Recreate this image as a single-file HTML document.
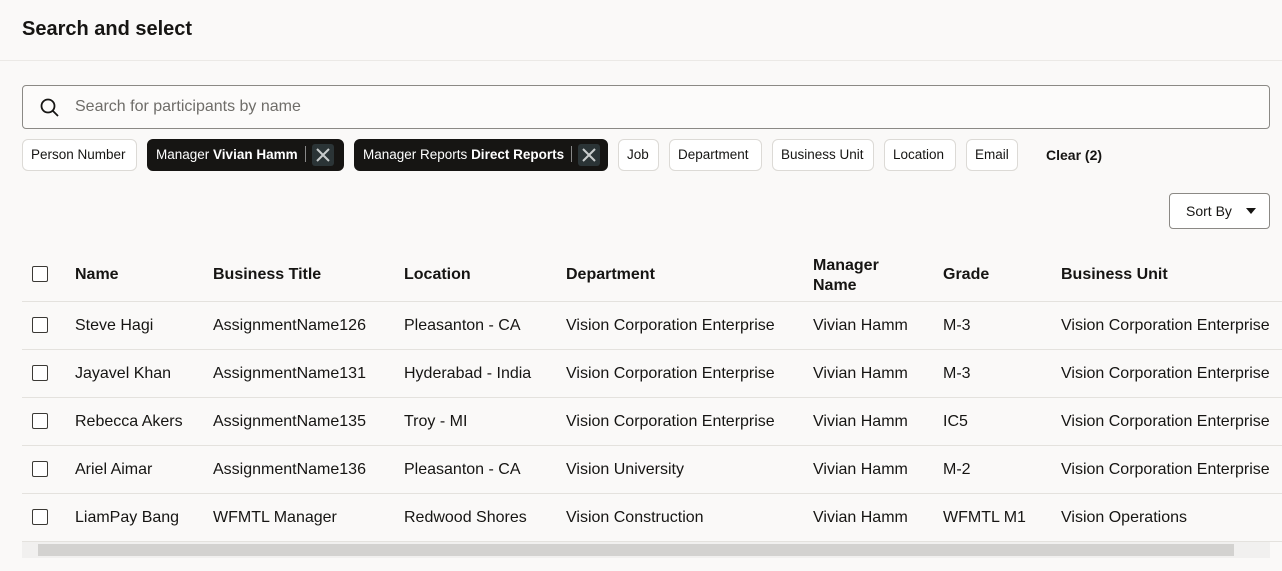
<!DOCTYPE html>
<html><head><meta charset="utf-8"><style>
*{box-sizing:border-box;margin:0;padding:0}
body{width:1282px;height:571px;overflow:hidden;background:#faf9f8;font-family:"Liberation Sans",sans-serif;color:#161513;position:relative}
.a{position:absolute;white-space:nowrap}
h1{position:absolute;left:22px;top:18px;font-size:20px;font-weight:bold}
.hr{position:absolute;left:0;right:0;top:60px;height:1px;background:#ebe9e6}
.search{position:absolute;left:22px;top:85px;width:1248px;height:44px;border:1px solid #8b8985;border-radius:4px;background:#fcfbfa}
.chip{position:absolute;top:139px;height:32px;border:1px solid #dcdad6;border-radius:6px;background:#fff;font-size:13.5px;line-height:30px;padding:0 8px;white-space:nowrap;overflow:hidden}
.chip.d{background:#161513;color:#fff;border-color:#161513;padding:0 0 0 8px}
.x{display:inline-block;vertical-align:top;margin:4px 4px 0 6px;width:22px;height:22px;border-radius:3px;background:#2b3436;position:relative}
.sep{display:inline-block;width:1px;height:16px;background:#888;vertical-align:middle;margin-left:7px;margin-top:-3px}
.cb{position:absolute;left:32px;width:16px;height:16px;border:1.5px solid #3b3935;border-radius:2px;background:#fff}
.th{position:absolute;font-size:16px;font-weight:bold;top:266px}
.line{position:absolute;left:22px;width:1260px;height:1px;background:#e4e2de}
.td{position:absolute;font-size:16px;white-space:nowrap}
</style></head><body>
<h1>Search and select</h1>
<div class="hr"></div>
<div class="search">
<svg class="a" style="left:16px;top:11px" width="22" height="22" viewBox="0 0 22 22"><circle cx="9" cy="9" r="6.5" fill="none" stroke="#161513" stroke-width="1.8"/><path d="M14 14l5 5" stroke="#161513" stroke-width="1.8"/></svg>
<span class="a" style="left:52px;top:12px;font-size:16px;color:#6f6d69">Search for participants by name</span>
</div>
<div class="chip" style="left:22px;width:115px">Person Number</div>
<div class="chip d" style="left:147px;width:197px">Manager <b>Vivian Hamm</b><span class="sep"></span><span class="x"><svg width="22" height="22" viewBox="0 0 22 22" style="position:absolute;left:0;top:0"><path d="M5 5l12 12M17 5L5 17" stroke="#c9cccd" stroke-width="2"/></svg></span></div>
<div class="chip d" style="left:354px;width:254px">Manager Reports <b>Direct Reports</b><span class="sep"></span><span class="x"><svg width="22" height="22" viewBox="0 0 22 22" style="position:absolute;left:0;top:0"><path d="M5 5l12 12M17 5L5 17" stroke="#c9cccd" stroke-width="2"/></svg></span></div>
<div class="chip" style="left:618px;width:41px">Job</div>
<div class="chip" style="left:669px;width:93px">Department</div>
<div class="chip" style="left:772px;width:102px">Business Unit</div>
<div class="chip" style="left:884px;width:72px">Location</div>
<div class="chip" style="left:966px;width:52px">Email</div>
<span class="a" style="left:1046px;top:147px;font-size:14px;font-weight:bold">Clear (2)</span>
<div class="a" style="left:1169px;top:193px;width:101px;height:36px;border:1px solid #8b8985;border-radius:4px;background:#fff;font-size:14px;line-height:34px;padding-left:16px">Sort By<svg class="a" style="left:76px;top:14px" width="10" height="6"><path d="M0 0h10L5 6z" fill="#161513"/></svg></div>
<div class="cb" style="top:266px"></div>
<div class="th" style="left:75px">Name</div>
<div class="th" style="left:213px">Business Title</div>
<div class="th" style="left:404px">Location</div>
<div class="th" style="left:566px">Department</div>
<div class="th" style="left:813px;top:256px;line-height:20px">Manager<br>Name</div>
<div class="th" style="left:943px">Grade</div>
<div class="th" style="left:1061px">Business Unit</div>
<div class="line" style="top:301px"></div>
<div class="line" style="top:349px"></div>
<div class="line" style="top:397px"></div>
<div class="line" style="top:445px"></div>
<div class="line" style="top:493px"></div>
<div class="line" style="top:541px"></div>

<div class="cb" style="top:317px"></div><div class="td" style="top:317px;left:75px">Steve Hagi</div><div class="td" style="top:317px;left:213px">AssignmentName126</div><div class="td" style="top:317px;left:404px">Pleasanton - CA</div><div class="td" style="top:317px;left:566px">Vision Corporation Enterprise</div><div class="td" style="top:317px;left:813px">Vivian Hamm</div><div class="td" style="top:317px;left:943px">M-3</div><div class="td" style="top:317px;left:1061px">Vision Corporation Enterprise</div>
<div class="cb" style="top:365px"></div><div class="td" style="top:365px;left:75px">Jayavel Khan</div><div class="td" style="top:365px;left:213px">AssignmentName131</div><div class="td" style="top:365px;left:404px">Hyderabad - India</div><div class="td" style="top:365px;left:566px">Vision Corporation Enterprise</div><div class="td" style="top:365px;left:813px">Vivian Hamm</div><div class="td" style="top:365px;left:943px">M-3</div><div class="td" style="top:365px;left:1061px">Vision Corporation Enterprise</div>
<div class="cb" style="top:413px"></div><div class="td" style="top:413px;left:75px">Rebecca Akers</div><div class="td" style="top:413px;left:213px">AssignmentName135</div><div class="td" style="top:413px;left:404px">Troy - MI</div><div class="td" style="top:413px;left:566px">Vision Corporation Enterprise</div><div class="td" style="top:413px;left:813px">Vivian Hamm</div><div class="td" style="top:413px;left:943px">IC5</div><div class="td" style="top:413px;left:1061px">Vision Corporation Enterprise</div>
<div class="cb" style="top:461px"></div><div class="td" style="top:461px;left:75px">Ariel Aimar</div><div class="td" style="top:461px;left:213px">AssignmentName136</div><div class="td" style="top:461px;left:404px">Pleasanton - CA</div><div class="td" style="top:461px;left:566px">Vision University</div><div class="td" style="top:461px;left:813px">Vivian Hamm</div><div class="td" style="top:461px;left:943px">M-2</div><div class="td" style="top:461px;left:1061px">Vision Corporation Enterprise</div>
<div class="cb" style="top:509px"></div><div class="td" style="top:509px;left:75px">LiamPay Bang</div><div class="td" style="top:509px;left:213px">WFMTL Manager</div><div class="td" style="top:509px;left:404px">Redwood Shores</div><div class="td" style="top:509px;left:566px">Vision Construction</div><div class="td" style="top:509px;left:813px">Vivian Hamm</div><div class="td" style="top:509px;left:943px">WFMTL M1</div><div class="td" style="top:509px;left:1061px">Vision Operations</div>

<div class="a" style="left:22px;top:542px;width:1248px;height:16px;background:#f1f0ef"></div>
<div class="a" style="left:38px;top:544px;width:1196px;height:12px;background:#d3d2d0"></div>
</body></html>
